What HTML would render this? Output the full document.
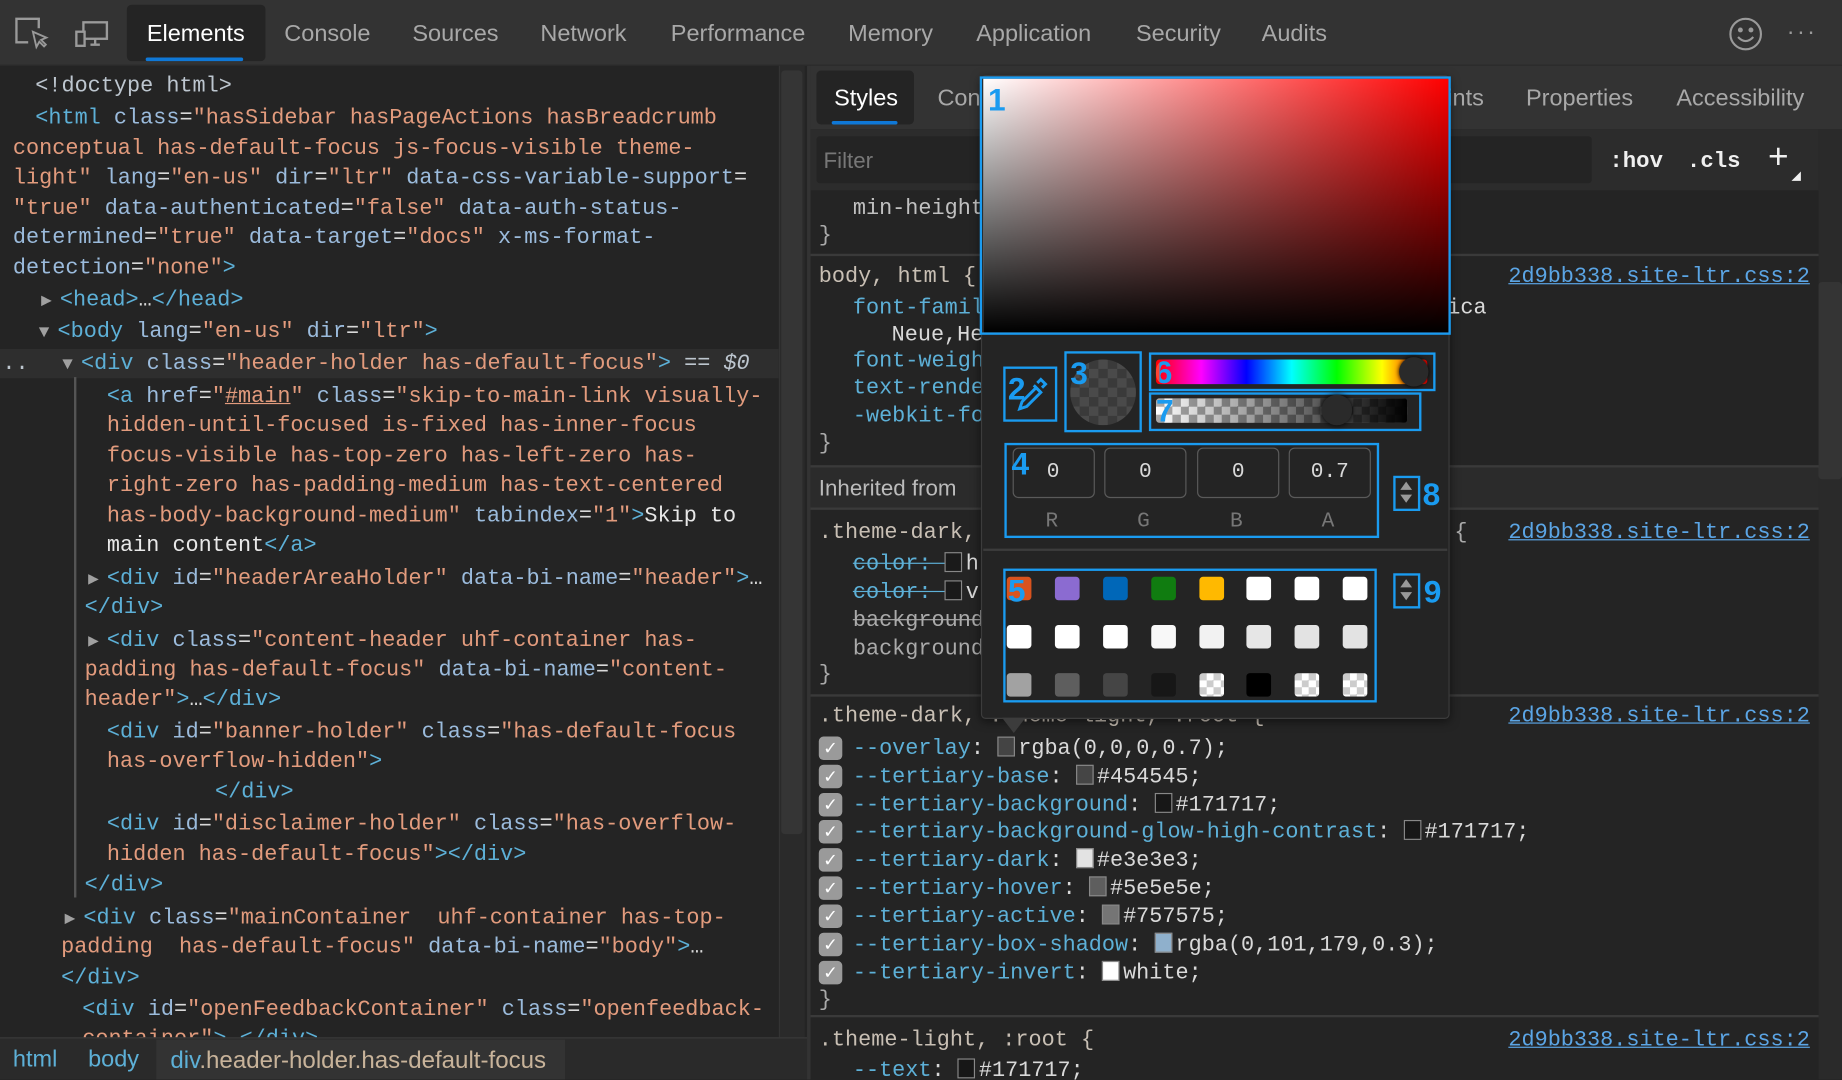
<!DOCTYPE html>
<html><head><meta charset="utf-8">
<style>
*{margin:0;padding:0;box-sizing:border-box}
html,body{width:1842px;height:1080px;overflow:hidden;background:#242424}
#w{position:absolute;left:0;top:0;width:1568px;height:919px;transform:scale(1.17474);transform-origin:0 0;background:#242424;overflow:hidden;font-family:"Liberation Sans",sans-serif}
.a{position:absolute;white-space:pre}
.m{font-family:"Liberation Mono",monospace;font-size:18.6px;line-height:26px;color:#d9d9d9;margin-top:2px}
.t{color:#5db0d7}.n{color:#9bbbdc}.v{color:#e29b7d}.g{color:#bdc6cf}.w{color:#e8e8e8}
.tab{position:absolute;top:18px;font-size:20px;color:#a8a8a8}
.tri{color:#a0a0a0;font-size:15px;display:inline-block;width:16px}
.lk{color:#5ba5e5;text-decoration:underline}
.p{color:#5db0d7}
.sw{display:inline-block;width:15px;height:17px;border:1.5px solid #888;vertical-align:-2px;margin-right:3px}
.cb{position:absolute;left:697px;width:20px;height:20px;border-radius:4px;background:#9a9a9a;color:#fff;font-size:15px;line-height:20px;text-align:center;font-family:"DejaVu Sans",sans-serif}
.bx{position:absolute;border:2.5px solid #1a9bf0}
.num{position:absolute;color:#1a9bf0;font-weight:bold;font-size:27px;font-family:"Liberation Sans",sans-serif;line-height:27px}
.inp{position:absolute;top:381px;width:70px;height:43px;border:1.5px solid #5a5a5a;border-radius:5px;font-family:"Liberation Mono",monospace;font-size:18px;color:#d9d9d9;line-height:40px;text-align:center}
.lab{position:absolute;top:434px;font-size:18px;color:#777;font-family:"Liberation Mono",monospace}
.pc{position:absolute;width:21px;height:20px;border-radius:3px}
.ck{background:conic-gradient(#fff 0 25%,#ccc 0 50%,#fff 0 75%,#ccc 0) 0 0/12px 12px}
</style></head><body><div id="w">

<!-- top toolbar -->
<div class="a" style="left:0;top:0;width:1568px;height:56px;background:#333;border-bottom:1px solid #2a2a2a"></div>
<svg class="a" style="left:12px;top:14px" width="30" height="28" viewBox="0 0 30 28" fill="none" stroke="#9a9a9a" stroke-width="2"><path d="M21 10V2H2v20h10"/><path d="M16 13l3 13 2.5-4.5 4 4 1.5-1.5-4-4 4.5-2z" stroke-width="1.6"/></svg>
<svg class="a" style="left:63px;top:17px" width="30" height="24" viewBox="0 0 30 24" fill="none" stroke="#9a9a9a" stroke-width="2"><rect x="8" y="2" width="20" height="14"/><path d="M14 21h8M18 16v5"/><rect x="2" y="10" width="7" height="12" fill="#333"/></svg>
<div class="a" style="left:108px;top:4px;width:118px;height:48px;background:#242424;border-radius:4px"></div>
<div class="a" style="left:124px;top:49px;width:83px;height:3px;background:#0f78d7;border-radius:2px"></div>
<div class="tab" style="left:125px;color:#fff">Elements</div>
<div class="tab" style="left:242px">Console</div>
<div class="tab" style="left:351px">Sources</div>
<div class="tab" style="left:460px">Network</div>
<div class="tab" style="left:571px">Performance</div>
<div class="tab" style="left:722px">Memory</div>
<div class="tab" style="left:831px">Application</div>
<div class="tab" style="left:967px">Security</div>
<div class="tab" style="left:1074px">Audits</div>
<svg class="a" style="left:1471px;top:14px" width="30" height="30" viewBox="0 0 30 30" fill="none" stroke="#9a9a9a" stroke-width="1.8"><circle cx="15" cy="15" r="13"/><circle cx="10.5" cy="11.5" r="1.2" fill="#9a9a9a"/><circle cx="19.5" cy="11.5" r="1.2" fill="#9a9a9a"/><path d="M8.5 17.5q6.5 7 13 0"/></svg>
<div class="a" style="left:1521px;top:16px;color:#9a9a9a;font-size:20px;letter-spacing:2px">···</div>

<!-- left panel -->
<div class="a" style="left:0;top:297px;width:663px;height:25px;background:#2e2e2e"></div>
<div class="a" style="left:663px;top:56px;width:22px;height:828px;background:#2a2a2a;border-left:1px solid #333"></div>
<div class="a" style="left:665px;top:60px;width:18px;height:650px;background:#353535;border-radius:3px"></div>
<div class="a" style="left:687px;top:56px;width:3px;height:863px;background:#333"></div>
<div class="a" style="left:63px;top:321px;width:1.5px;height:443px;background:#555"></div>

<div class="a m" style="left:30px;top:59px"><span class="g">&lt;!doctype html&gt;</span></div>
<div class="a m" style="left:30px;top:86px"><span class="t">&lt;html</span> <span class="n">class</span>=<span class="v">"hasSidebar hasPageActions hasBreadcrumb</span></div>
<div class="a m" style="left:11px;top:112px"><span class="v">conceptual has-default-focus js-focus-visible theme-</span></div>
<div class="a m" style="left:11px;top:137px"><span class="v">light"</span> <span class="n">lang</span>=<span class="v">"en-us"</span> <span class="n">dir</span>=<span class="v">"ltr"</span> <span class="n">data-css-variable-support</span>=</div>
<div class="a m" style="left:11px;top:163px"><span class="v">"true"</span> <span class="n">data-authenticated</span>=<span class="v">"false"</span> <span class="n">data-auth-status-</span></div>
<div class="a m" style="left:11px;top:188px"><span class="n">determined</span>=<span class="v">"true"</span> <span class="n">data-target</span>=<span class="v">"docs"</span> <span class="n">x-ms-format-</span></div>
<div class="a m" style="left:11px;top:214px"><span class="n">detection</span>=<span class="v">"none"</span><span class="t">&gt;</span></div>
<div class="a m" style="left:35px;top:241px"><span class="tri">▶</span><span class="t">&lt;head&gt;</span>…<span class="t">&lt;/head&gt;</span></div>
<div class="a m" style="left:33px;top:268px"><span class="tri">▼</span><span class="t">&lt;body</span> <span class="n">lang</span>=<span class="v">"en-us"</span> <span class="n">dir</span>=<span class="v">"ltr"</span><span class="t">&gt;</span></div>
<div class="a m" style="left:2px;top:295px"><span class="g">..</span></div>
<div class="a m" style="left:53px;top:295px"><span class="tri">▼</span><span class="t">&lt;div</span> <span class="n">class</span>=<span class="v">"header-holder has-default-focus"</span><span class="t">&gt;</span> <span class="g">== <i>$0</i></span></div>
<div class="a m" style="left:91px;top:323px"><span class="t">&lt;a</span> <span class="n">href</span>=<span class="v">"<u>#main</u>"</span> <span class="n">class</span>=<span class="v">"skip-to-main-link visually-</span></div>
<div class="a m" style="left:91px;top:348px"><span class="v">hidden-until-focused is-fixed has-inner-focus</span></div>
<div class="a m" style="left:91px;top:374px"><span class="v">focus-visible has-top-zero has-left-zero has-</span></div>
<div class="a m" style="left:91px;top:399px"><span class="v">right-zero has-padding-medium has-text-centered</span></div>
<div class="a m" style="left:91px;top:425px"><span class="v">has-body-background-medium"</span> <span class="n">tabindex</span>=<span class="v">"1"</span><span class="t">&gt;</span><span class="w">Skip to</span></div>
<div class="a m" style="left:91px;top:450px"><span class="w">main content</span><span class="t">&lt;/a&gt;</span></div>
<div class="a m" style="left:75px;top:478px"><span class="tri">▶</span><span class="t">&lt;div</span> <span class="n">id</span>=<span class="v">"headerAreaHolder"</span> <span class="n">data-bi-name</span>=<span class="v">"header"</span><span class="t">&gt;</span>…</div>
<div class="a m" style="left:72px;top:503px"><span class="t">&lt;/div&gt;</span></div>
<div class="a m" style="left:75px;top:531px"><span class="tri">▶</span><span class="t">&lt;div</span> <span class="n">class</span>=<span class="v">"content-header uhf-container has-</span></div>
<div class="a m" style="left:72px;top:556px"><span class="v">padding has-default-focus"</span> <span class="n">data-bi-name</span>=<span class="v">"content-</span></div>
<div class="a m" style="left:72px;top:581px"><span class="v">header"</span><span class="t">&gt;</span>…<span class="t">&lt;/div&gt;</span></div>
<div class="a m" style="left:91px;top:609px"><span class="t">&lt;div</span> <span class="n">id</span>=<span class="v">"banner-holder"</span> <span class="n">class</span>=<span class="v">"has-default-focus</span></div>
<div class="a m" style="left:91px;top:634px"><span class="v">has-overflow-hidden"</span><span class="t">&gt;</span></div>
<div class="a m" style="left:183px;top:660px"><span class="t">&lt;/div&gt;</span></div>
<div class="a m" style="left:91px;top:687px"><span class="t">&lt;div</span> <span class="n">id</span>=<span class="v">"disclaimer-holder"</span> <span class="n">class</span>=<span class="v">"has-overflow-</span></div>
<div class="a m" style="left:91px;top:713px"><span class="v">hidden has-default-focus"</span><span class="t">&gt;&lt;/div&gt;</span></div>
<div class="a m" style="left:72px;top:739px"><span class="t">&lt;/div&gt;</span></div>
<div class="a m" style="left:55px;top:767px"><span class="tri">▶</span><span class="t">&lt;div</span> <span class="n">class</span>=<span class="v">"mainContainer  uhf-container has-top-</span></div>
<div class="a m" style="left:52px;top:792px"><span class="v">padding  has-default-focus"</span> <span class="n">data-bi-name</span>=<span class="v">"body"</span><span class="t">&gt;</span>…</div>
<div class="a m" style="left:52px;top:818px"><span class="t">&lt;/div&gt;</span></div>
<div class="a m" style="left:70px;top:845px"><span class="t">&lt;div</span> <span class="n">id</span>=<span class="v">"openFeedbackContainer"</span> <span class="n">class</span>=<span class="v">"openfeedback-</span></div>
<div class="a m" style="left:70px;top:870px"><span class="v">container"</span><span class="t">&gt;</span>…<span class="t">&lt;/div&gt;</span></div>

<!-- breadcrumb -->
<div class="a" style="left:0;top:883px;width:687px;height:36px;background:#2a2a2a;border-top:1.5px solid #3a3a3a"></div>
<div class="a" style="left:133px;top:885px;width:348px;height:34px;background:#333"></div>
<div class="a" style="left:11px;top:891px;font-size:20px;color:#5db0d7">html</div>
<div class="a" style="left:75px;top:891px;font-size:20px;color:#5db0d7">body</div>
<div class="a" style="left:145px;top:891px;font-size:20.5px;color:#5db0d7">div<span style="color:#c8b39a">.header-holder.has-default-focus</span></div>

<!-- right panel -->
<div class="a" style="left:690px;top:56px;width:878px;height:54px;background:#333"></div>
<div class="a" style="left:695px;top:60px;width:83px;height:46px;background:#242424;border-radius:4px"></div>
<div class="a" style="left:708px;top:103px;width:56px;height:3px;background:#0f78d7;border-radius:2px"></div>
<div class="tab" style="left:710px;top:73px;color:#fff">Styles</div>
<div class="tab" style="left:798px;top:73px">Con</div>
<div class="tab" style="left:1232px;top:73px">ints</div>
<div class="tab" style="left:1299px;top:73px">Properties</div>
<div class="tab" style="left:1427px;top:73px">Accessibility</div>
<div class="a" style="left:690px;top:110px;width:858px;height:52px;background:#2c2c2c"></div>
<div class="a" style="left:695px;top:116px;width:660px;height:40px;background:#242424;border-radius:3px"></div>
<div class="a" style="left:701px;top:127px;font-size:19px;color:#777">Filter</div>
<div class="a" style="left:1370px;top:126px;font-family:'Liberation Mono',monospace;font-weight:bold;font-size:19px;color:#f0f0f0">:hov</div>
<div class="a" style="left:1436px;top:126px;font-family:'Liberation Mono',monospace;font-weight:bold;font-size:19px;color:#f0f0f0">.cls</div>
<div class="a" style="left:1505px;top:117px;font-size:30px;color:#f0f0f0;font-weight:300">+</div>
<div class="a" style="left:1525px;top:146px;width:0;height:0;border-left:8px solid transparent;border-bottom:8px solid #f0f0f0"></div>
<div class="a" style="left:1548px;top:110px;width:20px;height:809px;background:#2a2a2a"></div>
<div class="a" style="left:1548px;top:240px;width:20px;height:168px;background:#343434;border-radius:3px"></div>

<div class="a m" style="left:726px;top:163px;color:#c0c0c0">min-height</div>
<div class="a m" style="left:697px;top:186px;color:#aaa">}</div>
<div class="a" style="left:690px;top:216px;width:858px;height:2px;background:#3a3a3a"></div>
<div class="a m" style="left:697px;top:221px;color:#c8bfb4">body, html {</div>
<div class="a m lk" style="left:1284px;top:221px">2d9bb338.site-ltr.css:2</div>
<div class="a m p" style="left:726px;top:248px">font-famil</div>
<div class="a m" style="left:1232px;top:248px">ica</div>
<div class="a m" style="left:759px;top:271px">Neue,He</div>
<div class="a m p" style="left:726px;top:293px">font-weigh</div>
<div class="a m p" style="left:726px;top:316px">text-rende</div>
<div class="a m p" style="left:726px;top:340px">-webkit-fo</div>
<div class="a m" style="left:697px;top:363px;color:#aaa">}</div>
<div class="a" style="left:690px;top:396px;width:858px;height:38px;background:#2b2b2b;border-top:2px solid #3a3a3a;border-bottom:2px solid #3a3a3a"></div>
<div class="a" style="left:697px;top:406px;font-size:19px;color:#bbb">Inherited from</div>
<div class="a m" style="left:697px;top:439px;color:#c8bfb4">.theme-dark,</div>
<div class="a m" style="left:1238px;top:439px;color:#aaa">{</div>
<div class="a m lk" style="left:1284px;top:439px">2d9bb338.site-ltr.css:2</div>
<div class="a m" style="left:726px;top:466px"><span class="p" style="text-decoration:line-through">color: </span><span class="sw" style="background:#1a1a1a"></span>h</div>
<div class="a m" style="left:726px;top:490px"><span class="p" style="text-decoration:line-through">color: </span><span class="sw" style="background:#1a1a1a"></span>v</div>
<div class="a m" style="left:726px;top:514px;text-decoration:line-through;color:#aaa">background</div>
<div class="a m" style="left:726px;top:538px;color:#aaa">background</div>
<div class="a m" style="left:697px;top:560px;color:#aaa">}</div>
<div class="a" style="left:690px;top:591px;width:858px;height:2px;background:#3a3a3a"></div>
<div class="a m" style="left:697px;top:595px;color:#c8bfb4">.theme-dark, .theme-light, :root {</div>
<div class="a m lk" style="left:1284px;top:595px">2d9bb338.site-ltr.css:2</div>

<div class="cb" style="top:627px">✓</div><div class="a m" style="left:726px;top:623px"><span class="p">--overlay</span>: <span class="sw" style="background:#444"></span>rgba(0,0,0,0.7);</div>
<div class="cb" style="top:651px">✓</div><div class="a m" style="left:726px;top:647px"><span class="p">--tertiary-base</span>: <span class="sw" style="background:#454545"></span>#454545;</div>
<div class="cb" style="top:675px">✓</div><div class="a m" style="left:726px;top:671px"><span class="p">--tertiary-background</span>: <span class="sw" style="background:#171717"></span>#171717;</div>
<div class="cb" style="top:698px">✓</div><div class="a m" style="left:726px;top:694px"><span class="p">--tertiary-background-glow-high-contrast</span>: <span class="sw" style="background:#171717"></span>#171717;</div>
<div class="cb" style="top:722px">✓</div><div class="a m" style="left:726px;top:718px"><span class="p">--tertiary-dark</span>: <span class="sw" style="background:#e3e3e3"></span>#e3e3e3;</div>
<div class="cb" style="top:746px">✓</div><div class="a m" style="left:726px;top:742px"><span class="p">--tertiary-hover</span>: <span class="sw" style="background:#5e5e5e"></span>#5e5e5e;</div>
<div class="cb" style="top:770px">✓</div><div class="a m" style="left:726px;top:766px"><span class="p">--tertiary-active</span>: <span class="sw" style="background:#757575"></span>#757575;</div>
<div class="cb" style="top:794px">✓</div><div class="a m" style="left:726px;top:790px"><span class="p">--tertiary-box-shadow</span>: <span class="sw" style="background:#8fb0cc"></span>rgba(0,101,179,0.3);</div>
<div class="cb" style="top:818px">✓</div><div class="a m" style="left:726px;top:814px"><span class="p">--tertiary-invert</span>: <span class="sw" style="background:#fff"></span>white;</div>
<div class="a m" style="left:697px;top:837px;color:#aaa">}</div>
<div class="a" style="left:690px;top:864px;width:858px;height:2px;background:#3a3a3a"></div>
<div class="a m" style="left:697px;top:871px;color:#c8bfb4">.theme-light, :root {</div>
<div class="a m lk" style="left:1284px;top:871px">2d9bb338.site-ltr.css:2</div>
<div class="a m" style="left:726px;top:897px"><span class="p">--text</span>: <span class="sw" style="background:#171717"></span>#171717;</div>

<!-- color picker popup -->
<div class="a" style="left:835px;top:64px;width:399px;height:548px;background:#242424;border:1.5px solid #3c3c3c;border-radius:4px;box-shadow:0 2px 8px rgba(0,0,0,.5)"></div>
<div class="a" style="left:853px;top:611px;width:0;height:0;border-left:10px solid transparent;border-right:10px solid transparent;border-top:13px solid #3c3c3c"></div>
<div class="a" style="left:837px;top:67px;width:396px;height:216px;background:linear-gradient(to top,#000,rgba(0,0,0,0)),linear-gradient(to right,#fff,#f00)"></div>
<div class="bx" style="left:834px;top:65px;width:401px;height:220px"></div>
<div class="num" style="left:841px;top:72px">1</div>

<div class="bx" style="left:854px;top:312px;width:46px;height:47px"></div>
<svg class="a" style="left:862px;top:318px" width="30" height="34" viewBox="0 0 30 34" fill="none" stroke="#1a9bf0" stroke-width="2.5"><path d="M6 30l2-6 12-12 4 4-12 12z"/><path d="M18 10l6 6M21 8l3-3 4 4-3 3"/></svg>
<div class="num" style="left:858px;top:318px">2</div>

<div class="bx" style="left:906px;top:299px;width:66px;height:69px"></div>
<div class="a" style="left:911px;top:306px;width:56px;height:56px;border-radius:50%;background:conic-gradient(#4a4a4a 0 25%,#3a3a3a 0 50%,#4a4a4a 0 75%,#3a3a3a 0) 0 0/16px 16px"></div>
<div class="num" style="left:911px;top:305px">3</div>

<div class="bx" style="left:978px;top:300px;width:244px;height:33px"></div>
<div class="a" style="left:984px;top:306px;width:231px;height:21px;border-radius:3px;background:linear-gradient(to right,#f00,#f0f,#00f,#0ff,#0f0,#ff0,#f00)"></div>
<div class="a" style="left:1191px;top:304px;width:25px;height:25px;border-radius:50%;background:#2a2a2a;box-shadow:0 0 4px #000"></div>
<div class="num" style="left:983px;top:304px;color:#f43">6</div>
<div class="a" style="left:983px;top:304px;color:#1a9bf0;font-weight:bold;font-size:27px;line-height:27px;clip-path:inset(0 0 0 4px)">6</div>

<div class="bx" style="left:978px;top:334px;width:232px;height:33px"></div>
<div class="a" style="left:984px;top:339px;width:214px;height:21px;border-radius:3px;background:linear-gradient(to right,rgba(0,0,0,0),#000),conic-gradient(#fff 0 25%,#aaa 0 50%,#fff 0 75%,#aaa 0) 0 0/14px 14px"></div>
<div class="a" style="left:1125px;top:336px;width:26px;height:26px;border-radius:50%;background:#2a2a2a;box-shadow:0 0 5px #000"></div>
<div class="num" style="left:984px;top:337px">7</div>

<div class="bx" style="left:855px;top:377px;width:319px;height:81px"></div>
<div class="inp" style="left:862px;text-align:left;padding-left:28px">0</div>
<div class="inp" style="left:940px">0</div>
<div class="inp" style="left:1019px">0</div>
<div class="inp" style="left:1097px">0.7</div>
<div class="num" style="left:861px;top:382px">4</div>
<div class="lab" style="left:890px">R</div><div class="lab" style="left:968px">G</div><div class="lab" style="left:1047px">B</div><div class="lab" style="left:1125px">A</div>

<div class="bx" style="left:1186px;top:405px;width:23px;height:30px"></div>
<div class="a" style="left:1192px;top:410px;border-left:5px solid transparent;border-right:5px solid transparent;border-bottom:7px solid #999"></div>
<div class="a" style="left:1192px;top:421px;border-left:5px solid transparent;border-right:5px solid transparent;border-top:7px solid #999"></div>
<div class="num" style="left:1211px;top:408px">8</div>

<div class="a" style="left:837px;top:467px;width:395px;height:1.5px;background:#3c3c3c"></div>

<div class="bx" style="left:854px;top:484px;width:318px;height:114px"></div>
<div class="pc" style="left:857px;top:491px;background:#d9531e"></div>
<div class="pc" style="left:898px;top:491px;background:#8b6bd1"></div>
<div class="pc" style="left:939px;top:491px;background:#0067b8"></div>
<div class="pc" style="left:980px;top:491px;background:#107c10"></div>
<div class="pc" style="left:1021px;top:491px;background:#ffb900"></div>
<div class="pc" style="left:1061px;top:491px;background:#fff"></div>
<div class="pc" style="left:1102px;top:491px;background:#fff"></div>
<div class="pc" style="left:1143px;top:491px;background:#fff"></div>
<div class="pc" style="left:857px;top:532px;background:#fff"></div>
<div class="pc" style="left:898px;top:532px;background:#fff"></div>
<div class="pc" style="left:939px;top:532px;background:#fff"></div>
<div class="pc" style="left:980px;top:532px;background:#f8f8f8"></div>
<div class="pc" style="left:1021px;top:532px;background:#f2f2f2"></div>
<div class="pc" style="left:1061px;top:532px;background:#e6e6e6"></div>
<div class="pc" style="left:1102px;top:532px;background:#e3e3e3"></div>
<div class="pc" style="left:1143px;top:532px;background:#e3e3e3"></div>
<div class="pc" style="left:857px;top:573px;background:#a2a2a2"></div>
<div class="pc" style="left:898px;top:573px;background:#5e5e5e"></div>
<div class="pc" style="left:939px;top:573px;background:#454545"></div>
<div class="pc" style="left:980px;top:573px;background:#171717"></div>
<div class="pc ck" style="left:1021px;top:573px"></div>
<div class="pc" style="left:1061px;top:573px;background:#000"></div>
<div class="pc ck" style="left:1102px;top:573px"></div>
<div class="pc ck" style="left:1143px;top:573px"></div>
<div class="num" style="left:858px;top:490px;color:#1a9bf0">5</div>

<div class="bx" style="left:1186px;top:488px;width:23px;height:30px"></div>
<div class="a" style="left:1192px;top:493px;border-left:5px solid transparent;border-right:5px solid transparent;border-bottom:7px solid #999"></div>
<div class="a" style="left:1192px;top:504px;border-left:5px solid transparent;border-right:5px solid transparent;border-top:7px solid #999"></div>
<div class="num" style="left:1212px;top:491px">9</div>

</div></body></html>
